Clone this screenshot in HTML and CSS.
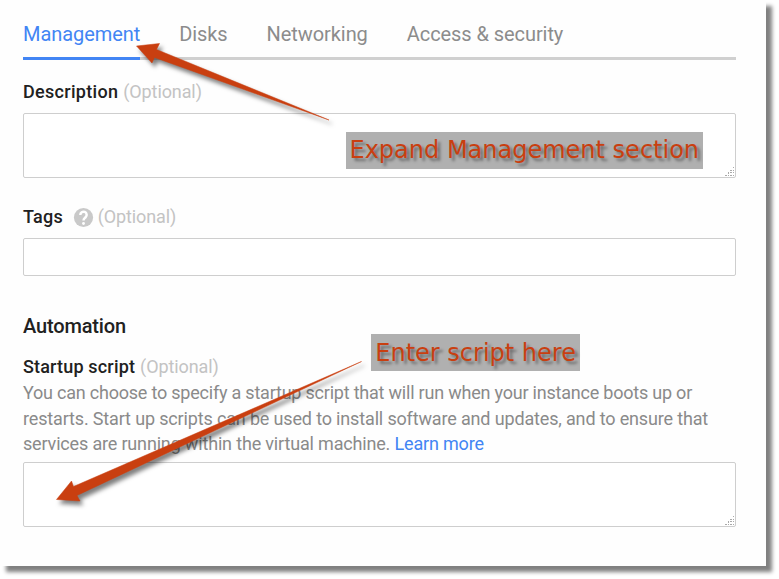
FILE: index.html
```html
<!DOCTYPE html>
<html lang="en">
<head>
<meta charset="utf-8">
<title>Management</title>
<link rel="stylesheet" href="styles.css">
</head>
<body>
<main class="panel">
  <nav class="tabs">
    <a class="tab tab-active">Management</a>
    <a class="tab">Disks</a>
    <a class="tab">Networking</a>
    <a class="tab">Access &amp; security</a>
  </nav>
  <div class="label label-description"><b>Description</b> <span class="optional">(Optional)</span></div>
  <div class="field area"><svg class="grip" viewBox="0 0 10 10"><path d="M8 0h1v1h-1zM5 3h2v1h-2zM8 3h1v1h-1zM3 5h1v1h-1zM5 5h2v1h-2zM8 5h1v1h-1zM3 6h1v1h-1zM0 8h2v1h-2zM3 8h1v1h-1zM5 8h2v1h-2zM8 8h1v1h-1z"/></svg></div>
  <div class="label label-tags"><b>Tags</b><svg class="help" viewBox="0 0 24 24"><path d="M12 2a10 10 0 1 0 0 20 10 10 0 0 0 0-20z"/><path class="help-mark" d="M8.700 9.300a3.300 3.300 0 1 1 5.500 2.400C12.800 12.900 12 13.400 12 15.200"/><circle class="help-dot" cx="12" cy="18.200" r="1.500"/></svg><span class="optional">(Optional)</span></div>
  <div class="field input"></div>
  <h2>Automation</h2>
  <div class="label label-script"><b>Startup script</b> <span class="optional">(Optional)</span></div>
  <p class="help-text"><span class="line line-1">You can choose to specify a startup script that will run when your instance boots up or</span><span class="line line-2">restarts. Start up scripts can be used to install software and updates, and to ensure that</span><span class="line line-3">services are running within the virtual machine. <a>Learn more</a></span></p>
  <div class="field area"><svg class="grip" viewBox="0 0 10 10"><path d="M8 0h1v1h-1zM5 3h2v1h-2zM8 3h1v1h-1zM3 5h1v1h-1zM5 5h2v1h-2zM8 5h1v1h-1zM3 6h1v1h-1zM0 8h2v1h-2zM3 8h1v1h-1zM5 8h2v1h-2zM8 8h1v1h-1z"/></svg></div>
</main>
<svg class="arrows" viewBox="0 0 779 579">
  <path d="M136.500 46 159.500 43.500 156.500 49.500 329 120 154.500 57.500 152 63z"/>
  <path d="M56.500 499.500 71.500 481 73.500 486.500 361.500 361.500 77 495.500 80 501z"/>
</svg>
<div class="callout callout-management">Expand Management section</div>
<div class="callout callout-script">Enter script here</div>
</body>
</html>
```

FILE: styles.css
```css
* { box-sizing: border-box; }
body {
  margin: 0;
  width: 779px;
  height: 579px;
  overflow: hidden;
  background: #fff;
  font: 18px/24px Roboto, sans-serif;
  position: relative;
}
.panel {
  width: 766px;
  height: 566px;
  padding: 16px 30px 0 23px;
  background: #fefefe;
  box-shadow: 6px 6px 4px #808080;
}
.tabs {
  display: flex;
  gap: 39px;
  height: 44px;
  border-bottom: 3px solid #d0d0d0;
}
.tab {
  height: 44px;
  font-size: 20px;
  line-height: 36px;
  letter-spacing: -0.07px;
  color: #8c8c8c;
  white-space: nowrap;
}
.tab-active {
  color: #4285f4;
  border-bottom: 3px solid #4285f4;
}
.label {
  display: flex;
  align-items: center;
  gap: 5px;
  height: 24px;
  color: #212121;
  white-space: nowrap;
}
.label b {
  font-weight: 500;
  letter-spacing: 0.3px;
}
.optional {
  color: #c3c3c3;
  letter-spacing: -0.1px;
}
.label-description { margin: 20px 0 9px; }
.label-tags { margin: 27px 0 9px; }
.label-script { margin: 17px 0 1px; }
.label-script b { letter-spacing: 0.17px; }
.help {
  width: 23px;
  height: 23px;
  margin: 0 -2.500px 0 4px;
  fill: #c9c9c9;
}
.help-mark {
  fill: none;
  stroke: #fff;
  stroke-width: 2.600px;
}
.help-dot { fill: #fff; }
.field {
  border: 1px solid #cecece;
  border-radius: 2px;
  background: #fff;
}
.area {
  display: flex;
  justify-content: flex-end;
  align-items: flex-end;
  height: 65px;
}
.grip {
  width: 10px;
  height: 10px;
  fill: #aaa;
  shape-rendering: crispEdges;
}
.input { height: 38px; }
h2 {
  margin: 38px 0 0;
  font-size: 20px;
  font-weight: 500;
  line-height: 24px;
  letter-spacing: -0.15px;
  color: #212121;
}
.help-text {
  margin: 0 0 5px;
  color: #8a8a8a;
}
.line {
  display: block;
  line-height: 25.500px;
  white-space: nowrap;
}
.line-1 { letter-spacing: -0.215px; }
.line-2 { letter-spacing: -0.155px; }
.line-3 { letter-spacing: -0.17px; }
.help-text a { color: #4285f4; }
.arrows {
  position: absolute;
  inset: 0;
  width: 779px;
  height: 579px;
  fill: #c93f10;
  stroke: #c93f10;
  stroke-width: 0.5px;
  filter: drop-shadow(3px 4px 2px rgba(0, 0, 0, 0.5));
}
.callout {
  position: absolute;
  height: 37px;
  padding-left: 4px;
  background: #b0b0b0;
  color: #c93f10;
  font: 24px/37px "DejaVu Sans", sans-serif;
  text-shadow: 3px 3px 3px rgba(0, 0, 0, 0.4);
  white-space: nowrap;
}
.callout-management { left: 345.500px; top: 131.500px; width: 357.500px; }
.callout-script { left: 371.300px; top: 334px; width: 208.500px; line-height: 38px; }
```
